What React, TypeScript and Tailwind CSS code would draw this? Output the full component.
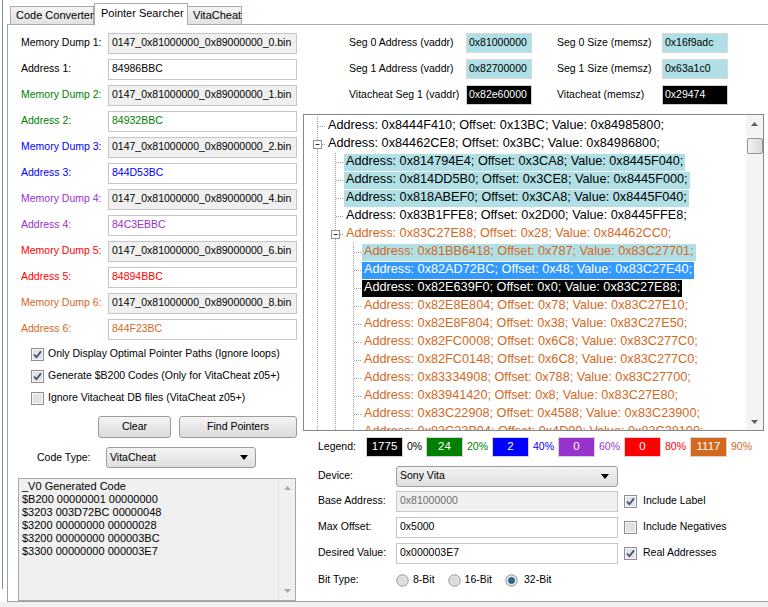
import React from "react";

type Cell = "line" | "tee" | "exp";

interface TreeItem {
  cells: Cell[];
  text: string;
  color?: string;
  bg?: string;
}

const dumps = [
  { n: 1, file: "0147_0x81000000_0x89000000_0.bin", addr: "84986BBC", color: "text-black" },
  { n: 2, file: "0147_0x81000000_0x89000000_1.bin", addr: "84932BBC", color: "text-[#008000]" },
  { n: 3, file: "0147_0x81000000_0x89000000_2.bin", addr: "844D53BC", color: "text-[#0000ff]" },
  { n: 4, file: "0147_0x81000000_0x89000000_4.bin", addr: "84C3EBBC", color: "text-[#9932cc]" },
  { n: 5, file: "0147_0x81000000_0x89000000_6.bin", addr: "84894BBC", color: "text-[#ff0000]" },
  { n: 6, file: "0147_0x81000000_0x89000000_8.bin", addr: "844F23BC", color: "text-[#d2691e]" },
];

const orange = "text-[#d2691e]";
const hl = "bg-[#b0e0e6]";

const tree: TreeItem[] = [
  { cells: ["tee"], text: "Address: 0x8444F410; Offset: 0x13BC; Value: 0x84985800;" },
  { cells: ["exp"], text: "Address: 0x84462CE8; Offset: 0x3BC; Value: 0x84986800;" },
  { cells: ["line", "tee"], text: "Address: 0x814794E4; Offset: 0x3CA8; Value: 0x8445F040;", bg: hl },
  { cells: ["line", "tee"], text: "Address: 0x814DD5B0; Offset: 0x3CE8; Value: 0x8445F000;", bg: hl },
  { cells: ["line", "tee"], text: "Address: 0x818ABEF0; Offset: 0x3CA8; Value: 0x8445F040;", bg: hl },
  { cells: ["line", "tee"], text: "Address: 0x83B1FFE8; Offset: 0x2D00; Value: 0x8445FFE8;" },
  { cells: ["line", "exp"], text: "Address: 0x83C27E88; Offset: 0x28; Value: 0x84462CC0;", color: orange },
  { cells: ["line", "line", "tee"], text: "Address: 0x81BB6418; Offset: 0x787; Value: 0x83C27701;", color: orange, bg: hl },
  { cells: ["line", "line", "tee"], text: "Address: 0x82AD72BC; Offset: 0x48; Value: 0x83C27E40;", color: "text-white", bg: "bg-[#3399ff]" },
  { cells: ["line", "line", "tee"], text: "Address: 0x82E639F0; Offset: 0x0; Value: 0x83C27E88;", color: "text-white", bg: "bg-black" },
  { cells: ["line", "line", "tee"], text: "Address: 0x82E8E804; Offset: 0x78; Value: 0x83C27E10;", color: orange },
  { cells: ["line", "line", "tee"], text: "Address: 0x82E8F804; Offset: 0x38; Value: 0x83C27E50;", color: orange },
  { cells: ["line", "line", "tee"], text: "Address: 0x82FC0008; Offset: 0x6C8; Value: 0x83C277C0;", color: orange },
  { cells: ["line", "line", "tee"], text: "Address: 0x82FC0148; Offset: 0x6C8; Value: 0x83C277C0;", color: orange },
  { cells: ["line", "line", "tee"], text: "Address: 0x83334908; Offset: 0x788; Value: 0x83C27700;", color: orange },
  { cells: ["line", "line", "tee"], text: "Address: 0x83941420; Offset: 0x8; Value: 0x83C27E80;", color: orange },
  { cells: ["line", "line", "tee"], text: "Address: 0x83C22908; Offset: 0x4588; Value: 0x83C23900;", color: orange },
  { cells: ["line", "line", "tee"], text: "Address: 0x83C23B04; Offset: 0x4D00; Value: 0x83C28100;", color: orange },
];

const legend = [
  { count: "1775", pct: "0%", box: "bg-black", text: "text-black", w: "w-[60px]" },
  { count: "24", pct: "20%", box: "bg-[#008000]", text: "text-[#008000]", w: "w-[66px]" },
  { count: "2", pct: "40%", box: "bg-[#0000ff]", text: "text-[#0000ff]", w: "w-[66px]" },
  { count: "0", pct: "60%", box: "bg-[#9932cc]", text: "text-[#9932cc]", w: "w-[66px]" },
  { count: "0", pct: "80%", box: "bg-[#ff0000]", text: "text-[#ff0000]", w: "w-[66px]" },
  { count: "1117", pct: "90%", box: "bg-[#d2691e]", text: "text-[#d2691e]", w: "w-[66px]" },
];

function TreeCell({ kind }: { kind: Cell }) {
  const dot = { stroke: "#a0a0a0", strokeWidth: 1, strokeDasharray: "1 1" };
  return (
    <svg width="18" height="18" className="shrink-0">
      <line x1="9.5" y1="0" x2="9.5" y2="18" {...dot} />
      {kind !== "line" && <line x1="10" y1="9.5" x2="18" y2="9.5" {...dot} />}
      {kind === "exp" && (
        <>
          <rect x="5.5" y="5.5" width="8" height="8" fill="#fff" stroke="#919191" />
          <line x1="7.5" y1="9.5" x2="11.5" y2="9.5" stroke="#333" />
        </>
      )}
    </svg>
  );
}

function Caret() {
  return (
    <svg width="8" height="5" className="shrink-0">
      <path d="M0 0h8L4 5z" fill="#000" />
    </svg>
  );
}

function CheckBox({ checked }: { checked: boolean }) {
  return (
    <svg width="13" height="13" className="shrink-0">
      <rect x="0.5" y="0.5" width="12" height="12" fill="#f6f6f6" stroke="#8e8f8f" />
      <rect x="2" y="2" width="9" height="9" fill="#e2e2e2" />
      {checked && (
        <path d="M3 6.5 L5.4 9.2 L10 3.4" fill="none" stroke="#3a4d7a" strokeWidth="1.7" />
      )}
    </svg>
  );
}

function Radio({ checked }: { checked: boolean }) {
  return (
    <svg width="13" height="13" className="shrink-0">
      <circle cx="6.5" cy="6.5" r="5.7" fill="#e9e9e9" stroke="#8e8f8f" />
      <circle cx="6.5" cy="6.5" r="4.2" fill="#dcdcdc" />
      {checked && <circle cx="6.5" cy="6.5" r="3" fill="#1d6a94" stroke="#0d3e5a" strokeWidth="0.6" />}
    </svg>
  );
}

function ScrollArrow({ up, color = "#606060" }: { up: boolean; color?: string }) {
  return (
    <svg width="7" height="4">
      <path d={up ? "M0 4h7L3.5 0z" : "M0 0h7L3.5 4z"} fill={color} />
    </svg>
  );
}

export default function App() {
  return (
    <div className="flex h-[607px] w-[768px] flex-col overflow-hidden bg-white font-['Liberation_Sans',Arial,sans-serif] text-[10.5px] text-black">
      <div className="flex h-[602px]">
        <div className="w-[2px]" />
        <div className="h-[589px] w-px bg-[#7d8a9c]" />
        <div className="w-[4px]" />
        <div className="flex flex-1 flex-col">
          {/* tab strip */}
          <div className="flex h-[25px] items-end border-b border-[#acacac] pl-[3px] text-[11px]">
            <div className="flex h-[18px] w-[84px] items-center whitespace-nowrap border border-b-0 border-[#acacac] bg-linear-to-b from-[#f4f4f4] to-[#e2e2e2] pl-[5px]">
              Code Converter
            </div>
            <div className="relative -mb-px flex h-[22px] w-[94px] items-center whitespace-nowrap border border-b-0 border-[#acacac] bg-white pb-[3px] pl-[6px]">
              Pointer Searcher
            </div>
            <div className="flex h-[18px] w-[54px] items-center whitespace-nowrap border border-b-0 border-l-0 border-[#acacac] bg-linear-to-b from-[#f4f4f4] to-[#e2e2e2] pl-[5px]">
              VitaCheat
            </div>
          </div>

          {/* tab page */}
          <div className="flex flex-1 border-b border-l border-[#a0a0a0]">
            {/* left column */}
            <div className="flex w-[292px] flex-col pl-[13px] pr-[3px] pt-[5px]">
              {dumps.map((d) => (
                <React.Fragment key={d.n}>
                  <div className={`flex h-[26px] items-center ${d.color}`}>
                    <span className="w-[87px] shrink-0">Memory Dump {d.n}:</span>
                    <div className="flex h-[21px] w-[189px] items-center whitespace-nowrap border border-[#c6c6c6] bg-[#f0f0f0] pl-[3px] text-black">
                      {d.file}
                    </div>
                  </div>
                  <div className={`flex h-[26px] items-center ${d.color}`}>
                    <span className="w-[87px] shrink-0">Address {d.n}:</span>
                    <div className="flex h-[21px] w-[189px] items-center border border-[#c6c6c6] bg-white pl-[3px]">
                      {d.addr}
                    </div>
                  </div>
                </React.Fragment>
              ))}

              <div className="ml-[10px] mt-px flex flex-col">
                {[
                  { c: true, t: "Only Display Optimal Pointer Paths (Ignore loops)" },
                  { c: true, t: "Generate $B200 Codes (Only for VitaCheat z05+)" },
                  { c: false, t: "Ignore Vitacheat DB files (VitaCheat z05+)" },
                ].map((o) => (
                  <div key={o.t} className="flex h-[22px] items-center gap-[4px]">
                    <CheckBox checked={o.c} />
                    <span>{o.t}</span>
                  </div>
                ))}
              </div>

              <div className="mt-[7px] flex justify-end gap-[8px]">
                <div className="flex h-[22px] w-[73px] items-center justify-center rounded-[3px] border border-[#9c9c9c] bg-linear-to-b from-[#f3f3f3] to-[#dcdcdc]">
                  Clear
                </div>
                <div className="flex h-[22px] w-[118px] items-center justify-center rounded-[3px] border border-[#9c9c9c] bg-linear-to-b from-[#f3f3f3] to-[#dcdcdc]">
                  Find Pointers
                </div>
              </div>

              <div className="mt-[9px] flex h-[21px] items-center pl-[16px]">
                <span className="w-[69px] shrink-0">Code Type:</span>
                <div className="flex h-[21px] w-[150px] items-center justify-between rounded-[3px] border border-[#9c9c9c] bg-linear-to-b from-[#f3f3f3] to-[#dfdfdf] pl-[3px] pr-[7px]">
                  <span>VitaCheat</span>
                  <Caret />
                </div>
              </div>

              <div className="-ml-[3px] mt-[10px] flex w-[278px] flex-1 border border-[#a8a8a8] bg-[#f0f0f0]">
                <div className="flex-1 pl-[3px] pt-px text-[11px] leading-[13px]">
                  <div>_V0 Generated Code</div>
                  <div>$B200 00000001 00000000</div>
                  <div>$3203 003D72BC 00000048</div>
                  <div>$3200 00000000 00000028</div>
                  <div>$3200 00000000 000003BC</div>
                  <div>$3300 00000000 000003E7</div>
                </div>
                <div className="flex w-[17px] flex-col items-center justify-between border-l border-[#e6e6e6] py-[7px]">
                  <ScrollArrow up color="#a8a8a8" />
                  <ScrollArrow up={false} color="#a8a8a8" />
                </div>
              </div>
            </div>

            {/* right column */}
            <div className="flex flex-1 flex-col pt-[5px]">
              {[
                { l1: "Seg 0 Address (vaddr)", v1: "0x81000000", l2: "Seg 0 Size (memsz)", v2: "0x16f9adc", dark: false, h: "h-[26px]" },
                { l1: "Seg 1 Address (vaddr)", v1: "0x82700000", l2: "Seg 1 Size (memsz)", v2: "0x63a1c0", dark: false, h: "h-[26px]" },
                { l1: "Vitacheat Seg 1 (vaddr)", v1: "0x82e60000", l2: "Vitacheat (memsz)", v2: "0x29474", dark: true, h: "h-[25px]" },
              ].map((r) => {
                const box = r.dark
                  ? "bg-black text-white border-[#d0d0d0]"
                  : "bg-[#b0e0e6] text-black border-[#d8d8d8]";
                return (
                  <div key={r.l1} className={`flex items-center pl-[49px] ${r.h}`}>
                    <span className="w-[117px] shrink-0">{r.l1}</span>
                    <div className={`flex h-[20px] w-[66px] items-center border pl-[2px] ${box}`}>{r.v1}</div>
                    <span className="ml-[25px] w-[105px] shrink-0">{r.l2}</span>
                    <div className={`flex h-[20px] w-[66px] items-center border pl-[2px] ${box}`}>{r.v2}</div>
                  </div>
                );
              })}

              {/* tree view */}
              <div className="ml-[3px] mt-[7px] flex h-[317px] w-[461px] overflow-hidden border border-[#828790] bg-white">
                <div className="flex-1 overflow-hidden pl-[4px] pt-[2px] text-[12.7px]">
                  {tree.map((t, i) => (
                    <div key={i} className="flex h-[18px] items-center">
                      {t.cells.map((c, j) => (
                        <TreeCell key={j} kind={c} />
                      ))}
                      <span
                        className={`flex h-[17px] items-center whitespace-nowrap px-[2px] ${t.bg ?? ""} ${t.color ?? "text-black"}`}
                      >
                        {t.text}
                      </span>
                    </div>
                  ))}
                </div>
                <div className="flex w-[17px] shrink-0 flex-col items-center bg-[#f4f4f4]">
                  <div className="flex h-[17px] items-center">
                    <ScrollArrow up />
                  </div>
                  <div className="ml-px mt-[6px] h-[16px] w-[16px] rounded-[2px] border border-[#979797] bg-linear-to-r from-[#f2f2f2] to-[#dadada]" />
                  <div className="flex-1" />
                  <div className="flex h-[17px] items-center">
                    <ScrollArrow up={false} />
                  </div>
                </div>
              </div>

              {/* legend */}
              <div className="mt-[6px] flex h-[20px] items-center pl-[18px]">
                <span className="w-[48px] shrink-0">Legend:</span>
                {legend.map((l, i) => (
                  <div key={i} className={`flex shrink-0 items-center ${l.w}`}>
                    <div
                      className={`flex h-[20px] w-[37px] items-center justify-center border border-[#d4d4d4] text-[11.5px] text-white ${l.box}`}
                    >
                      {l.count}
                    </div>
                    <span className={`ml-[4px] ${l.text}`}>{l.pct}</span>
                  </div>
                ))}
              </div>

              {/* device */}
              <div className="mt-[9px] flex h-[20px] items-center pl-[18px]">
                <span className="w-[78px] shrink-0">Device:</span>
                <div className="flex h-[21px] w-[222px] items-center justify-between rounded-[3px] border border-[#9c9c9c] bg-linear-to-b from-[#f3f3f3] to-[#dfdfdf] pl-[3px] pr-[8px]">
                  <span>Sony Vita</span>
                  <Caret />
                </div>
              </div>

              {[
                { l: "Base Address:", v: "0x81000000", c: true, ct: "Include Label", dis: true },
                { l: "Max Offset:", v: "0x5000", c: false, ct: "Include Negatives", dis: false },
                { l: "Desired Value:", v: "0x000003E7", c: true, ct: "Real Addresses", dis: false },
              ].map((r, i) => (
                <div key={r.l} className={`flex h-[20px] items-center pl-[18px] ${i === 0 ? "mt-[5px]" : "mt-[6px]"}`}>
                  <span className="w-[78px] shrink-0">{r.l}</span>
                  <div
                    className={`flex h-[21px] w-[222px] items-center border pl-[3px] ${
                      r.dis ? "border-[#c9c9c9] bg-[#f0f0f0] text-[#6d6d6d]" : "border-[#c6c6c6] bg-white"
                    }`}
                  >
                    {r.v}
                  </div>
                  <div className="ml-[6px] flex items-center gap-[6px]">
                    <CheckBox checked={r.c} />
                    <span>{r.ct}</span>
                  </div>
                </div>
              ))}

              <div className="mt-[7px] flex h-[20px] items-center pl-[18px]">
                <span className="w-[78px] shrink-0">Bit Type:</span>
                <div className="flex items-center gap-[4px]">
                  <Radio checked={false} />
                  <span>8-Bit</span>
                </div>
                <div className="ml-[13px] flex items-center gap-[4px]">
                  <Radio checked={false} />
                  <span>16-Bit</span>
                </div>
                <div className="ml-[13px] flex items-center gap-[6px]">
                  <Radio checked />
                  <span>32-Bit</span>
                </div>
              </div>
            </div>
          </div>
        </div>
      </div>
      <div className="flex-1 bg-[#f0f0f0]" />
    </div>
  );
}
